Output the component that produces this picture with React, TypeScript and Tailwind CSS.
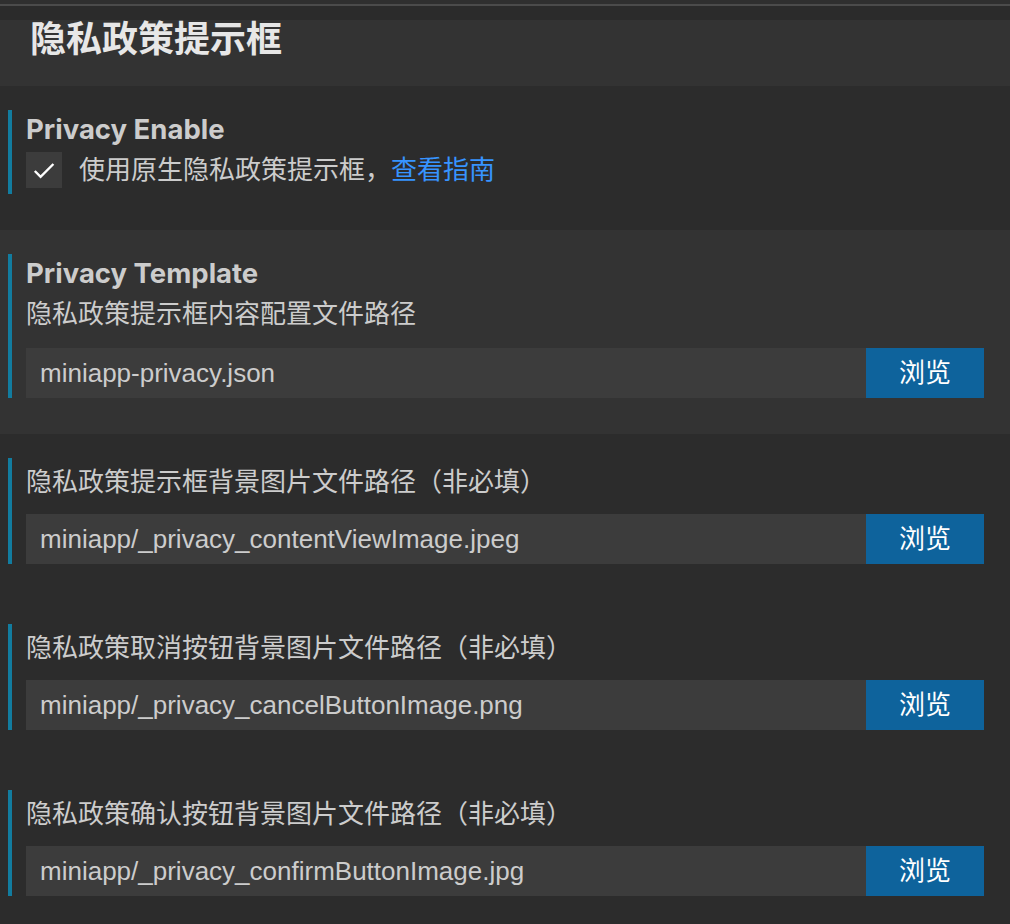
import { useState } from "react";

const FONT = "font-['Liberation_Sans','Noto_Sans_CJK_SC',sans-serif]";
const HEADING = "font-['Inter','Noto_Sans_CJK_SC',sans-serif] text-[27.5px] font-bold leading-[38px] text-[#cccccc]";

type PathField = {
  id: string;
  title?: string;
  label: string;
  value: string;
};

const FIELDS: PathField[] = [
  {
    id: "template",
    title: "Privacy Template",
    label: "隐私政策提示框内容配置文件路径",
    value: "miniapp-privacy.json",
  },
  {
    id: "content",
    label: "隐私政策提示框背景图片文件路径（非必填）",
    value: "miniapp/_privacy_contentViewImage.jpeg",
  },
  {
    id: "cancel",
    label: "隐私政策取消按钮背景图片文件路径（非必填）",
    value: "miniapp/_privacy_cancelButtonImage.png",
  },
  {
    id: "confirm",
    label: "隐私政策确认按钮背景图片文件路径（非必填）",
    value: "miniapp/_privacy_confirmButtonImage.jpg",
  },
];

function CheckMark() {
  return (
    <svg width="22" height="17" viewBox="0 0 22 17" fill="none">
      <path d="M1.8 9 7.6 14.8 20.4 2" stroke="#ffffff" strokeWidth="2.4" />
    </svg>
  );
}

function PathRow({ field, hovered }: { field: PathField; hovered: boolean }) {
  return (
    <section className={`pt-[24px] pb-[36px] ${hovered ? "bg-[#333333]" : ""}`}>
      <div className="ml-[8px] border-l-4 border-[#127c9f] pl-[14px] pr-[26px]">
        {field.title ? (
          <>
            <h3 className={HEADING}>{field.title}</h3>
            <p className="mt-[4px] text-[26px] leading-[36px] text-[#cccccc]">{field.label}</p>
          </>
        ) : (
          <p className="pt-[6px] text-[26px] leading-[36px] text-[#cccccc]">{field.label}</p>
        )}
        <div className={`flex h-[50px] ${field.title ? "mt-[16px]" : "mt-[14px]"}`}>
          <input
            readOnly
            value={field.value}
            className="min-w-0 flex-1 bg-[#3c3c3c] pl-[14px] text-[26px] text-[#cccccc] outline-none"
          />
          <button className="w-[118px] bg-[#0e639c] text-[26px] text-white">浏览</button>
        </div>
      </div>
    </section>
  );
}

export default function App() {
  const [enabled, setEnabled] = useState(true);

  return (
    <div className={`${FONT} min-h-screen w-[1010px] overflow-hidden bg-[#2c2c2c]`}>
      <div className="h-[4px] bg-[#2f2f2f]" />
      <div className="h-[2px] bg-[#4b4b4b]" />
      <div className="h-[14px] bg-[#2b2b2b]" />

      <header className="h-[66px] bg-[#333333] pl-[30px]">
        <h1 className="text-[36px] font-bold leading-[40px] text-[#e7e7e7]">隐私政策提示框</h1>
      </header>

      <section className="pt-[24px] pb-[36px]">
        <div className="ml-[8px] border-l-4 border-[#127c9f] pb-[6px] pl-[14px] pr-[26px]">
          <h3 className={HEADING}>Privacy Enable</h3>
          <div className="mt-[4px] flex items-center gap-[17px]">
            <button
              onClick={() => setEnabled(!enabled)}
              className="flex h-[36px] w-[36px] items-center justify-center bg-[#3c3c3c]"
            >
              {enabled && <CheckMark />}
            </button>
            <span className="text-[26px] leading-[36px] text-[#cccccc]">
              使用原生隐私政策提示框，<a className="text-[#3794ff]">查看指南</a>
            </span>
          </div>
        </div>
      </section>

      {FIELDS.map((field, i) => (
        <PathRow key={field.id} field={field} hovered={i === 0} />
      ))}
    </div>
  );
}
